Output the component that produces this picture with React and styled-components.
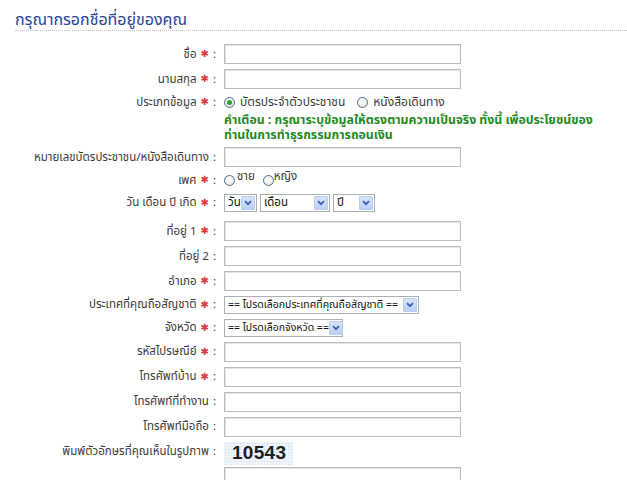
import React from 'react';
import styled, { createGlobalStyle } from 'styled-components';

const GlobalStyle = createGlobalStyle`
    body {
        margin: 0;
        background: #fff;
        font-family: Tahoma, "Noto Sans Thai", "Noto Sans", "DejaVu Sans", sans-serif;
        font-size: 11.5px;
        color: #333;
    }
`;

const Page = styled.div`
    width: 627px;
    height: 480px;
    overflow: hidden;
`;

const Header = styled.div`
    margin-left: 15px;
    padding-top: 11px;
    border-bottom: 1px dotted #c4c4c4;
    height: 31px;
    box-sizing: border-box;
    margin-bottom: 10.5px;
`;

const Title = styled.h2`
    margin: 0;
    font-size: 16px;
    line-height: 19px;
    font-weight: normal;
    color: #23449a;
`;

const Form = styled.div`
    display: grid;
    grid-template-columns: 216px 1fr;
    column-gap: 8px;
`;

const Label = styled.div`
    height: ${p => p.$h || 25}px;
    margin-bottom: ${p => p.$mb || 0}px;
    display: flex;
    align-items: center;
    justify-content: flex-end;
    white-space: nowrap;
    color: #3a3a3a;
`;

const Req = styled.span`
    color: #e0353a;
    font-size: 10px;
    margin: 0 4px;
`;

const Colon = styled.span`
    margin-left: ${p => p.$tight ? 0 : 4}px;
`;

const Cell = styled.div`
    height: ${p => p.$h || 25}px;
    margin-bottom: ${p => p.$mb || 0}px;
    display: flex;
    flex-direction: ${p => p.$top ? 'column' : 'row'};
    align-items: ${p => p.$top ? 'flex-start' : 'center'};
    gap: ${p => p.$gap || 0}px;
`;

const TextBox = styled.div`
    width: 237px;
    height: 20px;
    box-sizing: border-box;
    border: 1px solid #bdbdbd;
    box-shadow: inset 1px 1px 0 #e6e6e6;
    background: #fff;
`;

const RadioMark = styled.span`
    width: 11px;
    height: 11px;
    box-sizing: border-box;
    border-radius: 50%;
    border: 1px solid #4b6f8f;
    background: radial-gradient(circle at 40% 35%, #fff 0%, #f0f0ec 55%, #d8d8d0 100%);
    display: inline-flex;
    align-items: center;
    justify-content: center;
    flex: none;

    &::after {
        content: '';
        width: 5px;
        height: 5px;
        border-radius: 50%;
        background: ${p => p.$checked ? '#27a327' : 'transparent'};
    }
`;

const Choice = styled.span`
    display: inline-flex;
    align-items: center;
    gap: ${p => p.$gap ?? 5}px;
    margin-right: ${p => p.$mr || 0}px;
    color: #3a3a3a;
    font-size: ${p => p.$raise ? 11.5 : 12}px;

    span + span {
        position: relative;
        top: ${p => p.$raise ? -4 : 0}px;
    }
`;

const WarningLine = styled.div`
    color: #1f8a1f;
    font-weight: bold;
    font-size: 12.3px;
    line-height: 15px;
    white-space: nowrap;
`;

const SelectBox = styled.div`
    width: ${p => p.$w}px;
    height: 18px;
    box-sizing: border-box;
    border: 1px solid #a9b0b6;
    background: #fff;
    display: flex;
    align-items: center;
    justify-content: space-between;
    padding: 0 1px 0 3px;
    color: #111;
    font-size: ${p => p.$small ? 10.5 : 11.5}px;
    white-space: nowrap;
`;

const Arrow = styled.span`
    width: 14px;
    height: 14px;
    box-sizing: border-box;
    border: 1px solid #b9cdf2;
    border-radius: 1px;
    background: linear-gradient(#d8e4fb, #bccff6);
    display: inline-flex;
    align-items: center;
    justify-content: center;
    flex: none;
`;

const Captcha = styled.div`
    width: 69px;
    height: 23px;
    margin-top: 3px;
    background-color: #eef3f9;
    background-image: radial-gradient(#d3deec 0.7px, transparent 0.8px);
    background-size: 3px 3px;
    display: flex;
    align-items: center;
    padding-left: 8px;
    box-sizing: border-box;
    font-family: "Liberation Sans", Arial, sans-serif;
    font-weight: bold;
    font-size: 19px;
    color: #1e1e1e;
    letter-spacing: 0.3px;
`;

const Chevron = () => (
    <svg width="8" height="6" viewBox="0 0 8 6">
        <path d="M1 1.2 L4 4.2 L7 1.2" fill="none" stroke="#3a5fae" strokeWidth="1.8" />
    </svg>
);

const Select = ({ w, children, small }) => (
    <SelectBox $w={w} $small={small}>
        <span>{children}</span>
        <Arrow><Chevron /></Arrow>
    </SelectBox>
);

const FieldLabel = ({ text, req, h, mb }) => (
    <Label $h={h} $mb={mb}>
        {text}
        {req ? <Req>✱</Req> : null}
        <Colon $tight={req}>:</Colon>
    </Label>
);

const inputRows1 = [
    { text: 'ชื่อ', req: true },
    { text: 'นามสกุล', req: true },
];

const inputRows2 = [
    { text: 'ที่อยู่ 1', req: true },
    { text: 'ที่อยู่ 2' },
    { text: 'อำเภอ', req: true },
];

const inputRows3 = [
    { text: 'รหัสไปรษณีย์', req: true },
    { text: 'โทรศัพท์บ้าน', req: true },
    { text: 'โทรศัพท์ที่ทำงาน' },
    { text: 'โทรศัพท์มือถือ' },
];

const renderInputs = rows => rows.map(r => (
    <React.Fragment key={r.text}>
        <FieldLabel text={r.text} req={r.req} />
        <Cell><TextBox /></Cell>
    </React.Fragment>
));

export default function App() {
    return (
        <Page>
            <GlobalStyle />
            <Header>
                <Title>กรุณากรอกชื่อที่อยู่ของคุณ</Title>
            </Header>
            <Form>
                {renderInputs(inputRows1)}

                <FieldLabel text="ประเภทข้อมูล" req h={21.5} />
                <Cell $h={21.5}>
                    <Choice $mr={12}><RadioMark $checked /><span>บัตรประจำตัวประชาชน</span></Choice>
                    <Choice><RadioMark /><span>หนังสือเดินทาง</span></Choice>
                </Cell>

                <div />
                <Cell $h={31.5} $top>
                    <WarningLine>คำเตือน : กรุณาระบุข้อมูลให้ตรงตามความเป็นจริง ทั้งนี้ เพื่อประโยชน์ของ</WarningLine>
                    <WarningLine>ท่านในการทำธุรกรรมการถอนเงิน</WarningLine>
                </Cell>

                <FieldLabel text="หมายเลขบัตรประชาชน/หนังสือเดินทาง" />
                <Cell><TextBox /></Cell>

                <FieldLabel text="เพศ" req h={21} />
                <Cell $h={21}>
                    <Choice $gap={2} $mr={8} $raise><RadioMark /><span>ชาย</span></Choice>
                    <Choice $gap={0} $raise><RadioMark /><span>หญิง</span></Choice>
                </Cell>

                <FieldLabel text="วัน เดือน ปี เกิด" req h={24} mb={4} />
                <Cell $h={24} $mb={4} $gap={3}>
                    <Select w={33}>วัน</Select>
                    <Select w={70}>เดือน</Select>
                    <Select w={42}>ปี</Select>
                </Cell>

                {renderInputs(inputRows2)}

                <FieldLabel text="ประเทศที่คุณถือสัญชาติ" req h={22.5} />
                <Cell $h={22.5}>
                    <Select w={195} small>== โปรดเลือกประเทศที่คุณถือสัญชาติ ==</Select>
                </Cell>

                <FieldLabel text="จังหวัด" req h={23} />
                <Cell $h={23}>
                    <Select w={119} small>== โปรดเลือกจังหวัด ==</Select>
                </Cell>

                {renderInputs(inputRows3)}

                <FieldLabel text="พิมพ์ตัวอักษรที่คุณเห็นในรูปภาพ" />
                <Cell><Captcha>10543</Captcha></Cell>

                <div />
                <Cell><TextBox /></Cell>
            </Form>
        </Page>
    );
}
